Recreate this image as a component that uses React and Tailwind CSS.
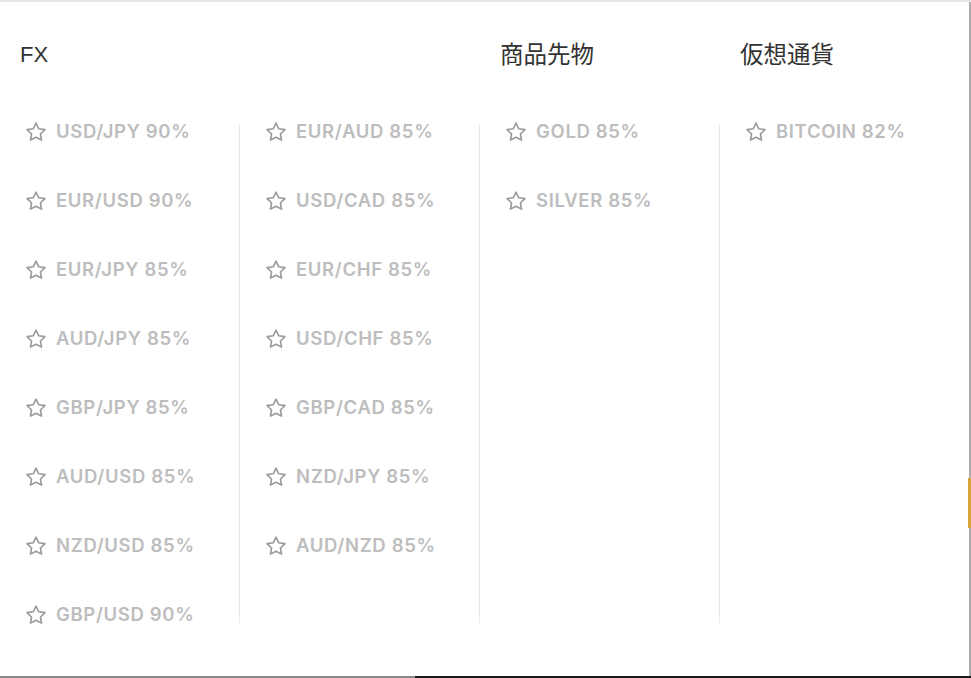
import React from "react";

const cols = [
  { title: "FX", items: ["USD/JPY 90%", "EUR/USD 90%", "EUR/JPY 85%", "AUD/JPY 85%", "GBP/JPY 85%", "AUD/USD 85%", "NZD/USD 85%", "GBP/USD 90%"] },
  { title: "", items: ["EUR/AUD 85%", "USD/CAD 85%", "EUR/CHF 85%", "USD/CHF 85%", "GBP/CAD 85%", "NZD/JPY 85%", "AUD/NZD 85%"] },
  { title: "商品先物", items: ["GOLD 85%", "SILVER 85%"] },
  { title: "仮想通貨", items: ["BITCOIN 82%"] },
];

function Star() {
  return (
    <svg width="24" height="24" viewBox="0 0 24 24" fill="none" stroke="#9a9a9a" strokeWidth="1.6" strokeLinejoin="round" className="shrink-0">
      <path d="M12 3.2l2.75 5.6 6.2.85-4.5 4.35 1.1 6.15L12 17.2l-5.55 2.95 1.1-6.15L3.05 9.65l6.2-.85z" />
    </svg>
  );
}

export default function App() {
  return (
    <div className="relative w-[971px] h-[678px] bg-white flex flex-col border-t-2 border-[#e4e4e4] overflow-hidden" style={{ fontFamily: "'Liberation Sans', 'Noto Sans CJK JP', sans-serif" }}>
      <div className="flex flex-1 border-r-2 border-[#ababab]">
        <div className="flex flex-col w-full">
          <div className="flex h-[122px]">
            {cols.map((c, i) => (
              <div key={i} className={"w-[240px] pl-[20px] pt-[38px] leading-[30px] text-[#333] " + (i === 0 ? "text-[22px]" : "text-[23.5px]")}>
                {c.title}
              </div>
            ))}
          </div>
          <div className="flex">
            {cols.map((c, i) => (
              <div key={i} className={"w-[240px] flex flex-col gap-[53px] pl-[24px] " + (i < 3 ? "border-r border-[#e8e8e8]" : "")}>
                {c.items.map((t) => (
                  <div key={t} className="h-[16px] flex items-center gap-[8px]">
                    <Star />
                    <span className="text-[18.5px] font-semibold text-[#bdbdbd] tracking-[0.65px]" style={{ fontFamily: "Inter, sans-serif" }}>{t}</span>
                  </div>
                ))}
              </div>
            ))}
          </div>
        </div>
      </div>
      <div className="flex h-[2px]">
        <div className="w-[415px] bg-[#8a8a8a]" />
        <div className="flex-1 bg-[#1a1a1a]" />
      </div>
      <div className="absolute right-0 top-[476px] w-[3px] h-[50px] bg-[#d6a63a]" />
    </div>
  );
}
